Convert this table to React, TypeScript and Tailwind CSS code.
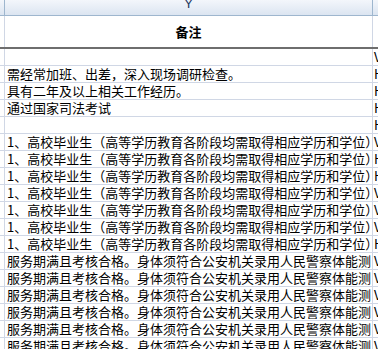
const font = "font-['SimSun','Noto_Sans_CJK_SC',sans-serif]";

type Row = { text: string; next: string };

const rows: Row[] = [
  { text: "", next: "V" },
  { text: "需经常加班、出差，深入现场调研检查。", next: "H" },
  { text: "具有二年及以上相关工作经历。", next: "H" },
  { text: "通过国家司法考试", next: "H" },
  { text: "", next: "H" },
  ...["V", "H", "H", "V", "V", "V", "H"].map((n) => ({
    text: "1、高校毕业生（高等学历教育各阶段均需取得相应学历和学位）",
    next: n,
  })),
  ...["V", "V", "V", "V", "V", "V"].map((n) => ({
    text: "服务期满且考核合格。身体须符合公安机关录用人民警察体能测",
    next: n,
  })),
];

function Cell({ row }: { row: Row }) {
  return (
    <div className="flex h-[17px] border-b border-[#d0d7e5]">
      <div className="w-[5px] shrink-0 border-r border-[#d0d7e5]" />
      <div className="w-[368px] shrink-0 overflow-hidden whitespace-nowrap border-r border-[#d0d7e5] pl-[2px] text-[13px] leading-[16px] text-black">
        {row.text}
      </div>
      <div className="flex-1 overflow-hidden whitespace-nowrap pl-[1px] text-[13px] leading-[16px] text-black">
        {row.next}
      </div>
    </div>
  );
}

export default function App() {
  return (
    <div className={`w-[378px] h-[349px] overflow-hidden bg-white ${font}`}>
      {/* column header bar */}
      <div className="flex h-[16px] border-b border-[#9eb6ce] bg-gradient-to-b from-[#f3f6fb] to-[#dce5f1]">
        <div className="w-[5px] shrink-0 border-r border-[#9eb6ce]" />
        <div className="w-[368px] shrink-0 overflow-hidden border-r border-[#9eb6ce] text-center text-[13px] leading-[8px] text-[#1f3a60] font-['Liberation_Sans',sans-serif]">
          Y
        </div>
        <div className="flex-1" />
      </div>
      {/* title row */}
      <div className="flex h-[33px] border-b-2 border-[#6e6e6e]">
        <div className="w-[5px] shrink-0 border-r border-[#d0d7e5]" />
        <div className="flex w-[368px] shrink-0 items-center justify-center border-r border-[#d0d7e5] text-[13px] font-bold text-black">
          备注
        </div>
        <div className="flex-1" />
      </div>
      {rows.map((r, i) => (
        <Cell key={i} row={r} />
      ))}
    </div>
  );
}
